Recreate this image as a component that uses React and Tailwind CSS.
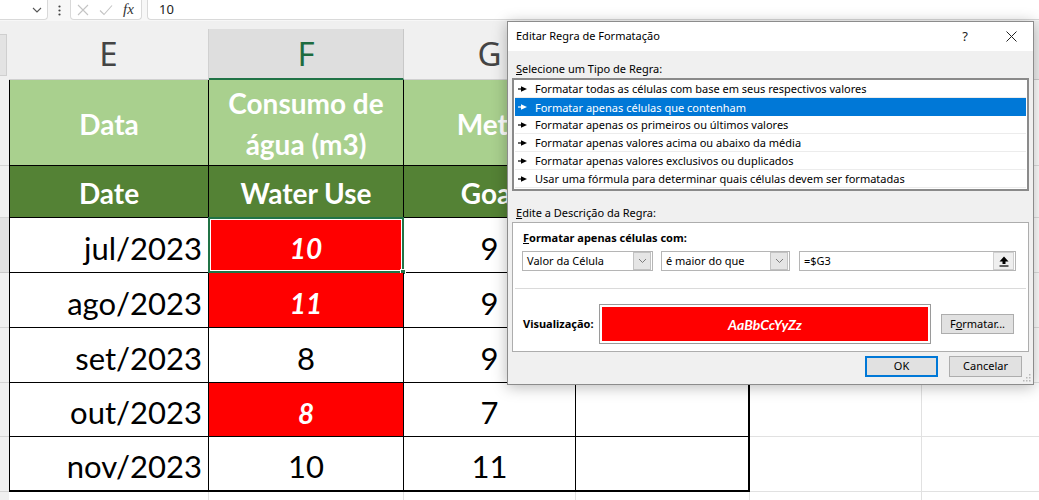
import React from "react";

const rows = [
  { d: "jul/2023", v: "10", red: true, g: "9", h: 55, sel: true },
  { d: "ago/2023", v: "11", red: true, g: "9", h: 55 },
  { d: "set/2023", v: "8", red: false, g: "9", h: 55 },
  { d: "out/2023", v: "8", red: true, g: "7", h: 54 },
  { d: "nov/2023", v: "10", red: false, g: "11", h: 55, last: true },
];

const items = [
  "Formatar todas as células com base em seus respectivos valores",
  "Formatar apenas células que contenham",
  "Formatar apenas os primeiros ou últimos valores",
  "Formatar apenas valores acima ou abaixo da média",
  "Formatar apenas valores exclusivos ou duplicados",
  "Usar uma fórmula para determinar quais células devem ser formatadas",
];

function ListArrow({ color }) {
  return (
    <svg width="10" height="8" viewBox="0 0 10 8" className="shrink-0">
      <path d="M0 4h4" stroke={color} strokeWidth="1.2" />
      <path d="M3 1.2L9 4 3 6.8z" fill={color} />
    </svg>
  );
}

function Chevron() {
  return (
    <div className="w-[18px] h-[18px] bg-[#e5e5e5] border border-[#c2c2c2] flex items-center justify-center">
      <svg width="9" height="6" viewBox="0 0 9 6">
        <path d="M1 1l3.5 3.5L8 1" stroke="#7a7a7a" strokeWidth="1" fill="none" />
      </svg>
    </div>
  );
}

function GridTail({ h }) {
  return (
    <>
      <div className="w-[172px] shrink-0 border-r border-b border-[#e1e1e1]" style={{ height: h }} />
      <div className="flex-1 border-b border-[#e1e1e1]" style={{ height: h }} />
    </>
  );
}

export default function App() {
  const xl = "font-['Lato',sans-serif]";
  return (
    <div className="w-[1039px] h-[500px] relative overflow-hidden bg-white font-['Noto_Sans',sans-serif]">
      {/* Formula bar */}
      <div className="h-[21px] flex bg-[#f7f7f7]">
        <div className="w-[48px] h-[20px] bg-white border-r border-b border-[#d9d9d9] rounded-br-[4px] flex items-center justify-end pr-[5px]">
          <svg width="10" height="6" viewBox="0 0 10 6">
            <path d="M1 1l4 4 4-4" stroke="#555" strokeWidth="1.1" fill="none" />
          </svg>
        </div>
        <div className="w-[22px] flex items-center justify-center">
          <svg width="3" height="11" viewBox="0 0 3 11">
            <circle cx="1.5" cy="1.5" r="1.1" fill="#444" />
            <circle cx="1.5" cy="5.5" r="1.1" fill="#444" />
            <circle cx="1.5" cy="9.5" r="1.1" fill="#444" />
          </svg>
        </div>
        <div className="w-[72px] h-[20px] bg-white border-x border-b border-[#d9d9d9] rounded-b-[4px] flex items-center">
          <svg width="12" height="12" viewBox="0 0 12 12" className="ml-[6px]">
            <path d="M1 1l10 10M11 1L1 11" stroke="#c4c4c4" strokeWidth="1.1" />
          </svg>
          <svg width="14" height="12" viewBox="0 0 14 12" className="ml-[10px]">
            <path d="M1 6.5l4 4L13 1.5" stroke="#c4c4c4" strokeWidth="1.1" fill="none" />
          </svg>
          <span className="ml-[10px] font-['Liberation_Serif',serif] italic text-[15px] leading-none text-[#333]">fx</span>
        </div>
        <div className="w-[5px]" />
        <div className="flex-1 h-[20px] bg-white border-l border-b border-[#d9d9d9] rounded-bl-[4px] flex items-center pl-[11px] text-[13px] text-[#222]">
          10
        </div>
      </div>

      {/* gap */}
      <div className="h-[8px] bg-[#f0f0f0]" />

      {/* column headers */}
      <div className="h-[51px] flex bg-[#f0f0f0] font-['Noto_Sans',sans-serif] text-[33px] text-[#444] leading-none">
        <div className="w-[9px] shrink-0 flex items-center">
          <div className="w-[7px] h-[42px] bg-[#e3e3e3] border-y border-r border-[#cfcfcf]" />
        </div>
        <div className="w-[200px] shrink-0 border-r border-b border-[#d0d0d0] flex items-center justify-center pb-[2px]">E</div>
        <div className="w-[195px] shrink-0 bg-[#dedede] border-r border-[#c8c8c8] border-b-2 border-b-[#217346] flex items-center justify-center text-[#1d6b3f] pb-[1px]">F</div>
        <div className="w-[172px] shrink-0 border-r border-b border-[#d0d0d0] flex items-center justify-center pb-[2px]">G</div>
        <div className="w-[174px] shrink-0 border-r border-b border-[#d0d0d0]" />
        <div className="w-[172px] shrink-0 border-r border-b border-[#d0d0d0]" />
        <div className="flex-1 border-b border-[#d0d0d0]" />
      </div>

      {/* header row 1 */}
      <div className={`flex ${xl} text-white font-bold text-[28px]`}>
        <div className="w-[9px] h-[86px] shrink-0 bg-[#f0f0f0] border-b border-[#d4d4d4]" />
        <div className="w-[200px] h-[86px] shrink-0 bg-[#a9d08e] border-l border-r border-b border-black flex items-center justify-center pt-[2px]">Data</div>
        <div className="w-[195px] h-[86px] shrink-0 bg-[#a9d08e] border-r border-b border-black flex flex-col items-center justify-center leading-[41px] pt-[2px]">
          <span>Consumo de</span>
          <span>água (m3)</span>
        </div>
        <div className="w-[172px] h-[86px] shrink-0 bg-[#a9d08e] border-r border-b border-black flex items-center justify-center pt-[2px]">Meta</div>
        <div className="w-[174px] h-[86px] shrink-0 bg-[#a9d08e] border-r-2 border-b border-black" />
        <GridTail h={86} />
      </div>

      {/* header row 2 */}
      <div className={`flex ${xl} text-white font-bold text-[28px]`}>
        <div className="w-[9px] h-[52px] shrink-0 bg-[#f0f0f0] border-b border-[#d4d4d4]" />
        <div className="w-[200px] h-[52px] shrink-0 bg-[#548235] border-l border-r border-b border-black flex items-center justify-center pt-[2px]">Date</div>
        <div className="w-[195px] h-[52px] shrink-0 bg-[#548235] border-r border-b border-black flex items-center justify-center pt-[2px]">Water Use</div>
        <div className="w-[172px] h-[52px] shrink-0 bg-[#548235] border-r border-b border-black flex items-center justify-center pt-[2px]">Goal</div>
        <div className="w-[174px] h-[52px] shrink-0 bg-[#548235] border-r-2 border-b border-black" />
        <GridTail h={52} />
      </div>

      {/* data rows */}
      {rows.map((r) => (
        <div key={r.d} className={`flex ${xl} text-[31px] text-black`}>
          <div
            className={`w-[9px] shrink-0 border-b ${r.sel ? "bg-[#e2e2e2] border-[#c8c8c8]" : "bg-[#f0f0f0] border-[#d4d4d4]"}`}
            style={{ height: r.h }}
          />
          <div
            className={`w-[200px] shrink-0 border-l border-r border-black flex items-center justify-end pr-[6px] pt-[6px] ${r.last ? "border-b-2" : "border-b"}`}
            style={{ height: r.h }}
          >
            {r.d}
          </div>
          <div
            className={`relative w-[195px] shrink-0 border-r border-black flex items-center justify-center pt-[6px] ${r.last ? "border-b-2" : "border-b"} ${r.red ? "bg-[#ff0000] text-white font-bold italic text-[28px]" : ""}`}
            style={{ height: r.h }}
          >
            {r.v}
            {r.sel && (
              <div className="absolute -left-px -top-px right-[-1px] bottom-[-1px] border-2 border-[#217346]">
                <div className="absolute inset-0 border border-white" />
                <div className="absolute right-[-4px] bottom-[-4px] w-[6px] h-[6px] bg-[#217346] border border-white" />
              </div>
            )}
          </div>
          <div
            className={`w-[172px] shrink-0 border-r border-black flex items-center justify-center pt-[6px] ${r.last ? "border-b-2" : "border-b"}`}
            style={{ height: r.h }}
          >
            {r.g}
          </div>
          <div
            className={`w-[174px] shrink-0 border-r-2 border-black ${r.last ? "border-b-2" : "border-b"}`}
            style={{ height: r.h }}
          />
          <GridTail h={r.h} />
        </div>
      ))}

      {/* trailing row */}
      <div className="flex">
        <div className="w-[9px] h-[20px] shrink-0 bg-[#f0f0f0]" />
        <div className="w-[200px] h-[20px] shrink-0 border-r border-[#e1e1e1]" />
        <div className="w-[195px] h-[20px] shrink-0 border-r border-[#e1e1e1]" />
        <div className="w-[172px] h-[20px] shrink-0 border-r border-[#e1e1e1]" />
        <div className="w-[174px] h-[20px] shrink-0 border-r border-[#e1e1e1]" />
        <div className="w-[172px] h-[20px] shrink-0 border-r border-[#e1e1e1]" />
      </div>

      {/* Dialog */}
      <div className="absolute left-[507px] top-[21px] w-[527px] h-[364px] bg-[#f0f0f0] border border-[#8c8c8c] shadow-[0_2px_14px_rgba(0,0,0,0.28)] text-[11px] text-black flex flex-col">
        <div className="h-[29px] bg-white flex items-center pl-[8px] shrink-0">
          <span className="text-[11px]">Editar Regra de Formatação</span>
          <span className="ml-auto text-[13px] mr-[38px] text-[#222]">?</span>
          <svg width="11" height="11" viewBox="0 0 11 11" className="mr-[16px]">
            <path d="M0.5 0.5l10 10M10.5 0.5l-10 10" stroke="#222" strokeWidth="1" />
          </svg>
        </div>
        <div className="px-[4px] pt-[9px] flex flex-col">
          <div className="h-[18px] leading-[18px] pl-[4px]">
            <span className="underline">S</span>elecione um Tipo de Regra:
          </div>
          <div className="h-[113px] bg-white border-2 border-[#8a8a8a] flex flex-col">
            {items.map((t, i) => (
              <div
                key={t}
                className={`h-[18px] shrink-0 flex items-center gap-[7px] pl-[3px] mx-[1px] ${i === 1 ? "bg-[#0078d7] text-white" : "border-b border-[#ececec]"}`}
              >
                <ListArrow color={i === 1 ? "#fff" : "#000"} />
                <span className="leading-none">{t}</span>
              </div>
            ))}
          </div>
          <div className="h-[18px] leading-[18px] pl-[4px] mt-[13px]">
            <span className="underline">E</span>dite a Descrição da Regra:
          </div>
          <div className="h-[130px] bg-white border border-[#adadad] flex flex-col">
            <div className="h-[16px] leading-[16px] mt-[7px] pl-[10px] font-bold">
              <span className="underline">F</span>ormatar apenas células com:
            </div>
            <div className="flex h-[20px] mt-[5px] pl-[9px]">
              <div className="w-[131px] h-[20px] border border-[#b5b5b5] flex items-center pl-[4px] pr-px">
                <span>Valor da Célula</span>
                <div className="ml-auto"><Chevron /></div>
              </div>
              <div className="w-[129px] h-[20px] ml-[8px] border border-[#b5b5b5] flex items-center pl-[4px] pr-px">
                <span>é maior do que</span>
                <div className="ml-auto"><Chevron /></div>
              </div>
              <div className="w-[217px] h-[20px] ml-[9px] border border-[#b5b5b5] flex items-center pl-[4px] pr-px">
                <span>=$G3</span>
                <div className="ml-auto w-[21px] h-[18px] bg-[#efefef] border border-[#cfcfcf] flex items-center justify-center">
                  <svg width="10" height="11" viewBox="0 0 10 11">
                    <path d="M5 0.5L9.5 5.5H6.5V8H3.5V5.5H0.5z" fill="#000" />
                    <path d="M0.5 10h9" stroke="#000" strokeWidth="1.2" />
                  </svg>
                </div>
              </div>
            </div>
            <div className="h-px bg-[#dadada] mt-[17px] mx-[2px]" />
            <div className="flex items-center mt-[15px] pl-[10px]">
              <div className="w-[76px] font-bold">Visualização:</div>
              <div className="w-[332px] h-[40px] border border-[#9a9a9a] p-[2px] bg-white">
                <div className="w-full h-full bg-[#ff0000] flex items-center justify-center text-white font-bold italic text-[14px] font-['Lato',sans-serif]">
                  AaBbCcYyZz
                </div>
              </div>
              <div className="ml-[10px] w-[73px] h-[20px] bg-[#e1e1e1] border border-[#adadad] flex items-center justify-center">
                F<span className="underline">o</span>rmatar...
              </div>
            </div>
          </div>
          <div className="flex mt-[4px] justify-end pr-[7px] gap-[11px]">
            <div className="w-[73px] h-[21px] bg-[#e1e1e1] border-2 border-[#0078d7] flex items-center justify-center">OK</div>
            <div className="w-[73px] h-[21px] bg-[#e1e1e1] border border-[#adadad] flex items-center justify-center">Cancelar</div>
          </div>
        </div>
        <svg width="8" height="8" viewBox="0 0 8 8" className="absolute right-[2px] bottom-[2px]">
          <rect x="6" y="0" width="1.5" height="1.5" fill="#b8b8b8" />
          <rect x="3" y="3" width="1.5" height="1.5" fill="#b8b8b8" />
          <rect x="6" y="3" width="1.5" height="1.5" fill="#b8b8b8" />
          <rect x="0" y="6" width="1.5" height="1.5" fill="#b8b8b8" />
          <rect x="3" y="6" width="1.5" height="1.5" fill="#b8b8b8" />
          <rect x="6" y="6" width="1.5" height="1.5" fill="#b8b8b8" />
        </svg>
      </div>
    </div>
  );
}
